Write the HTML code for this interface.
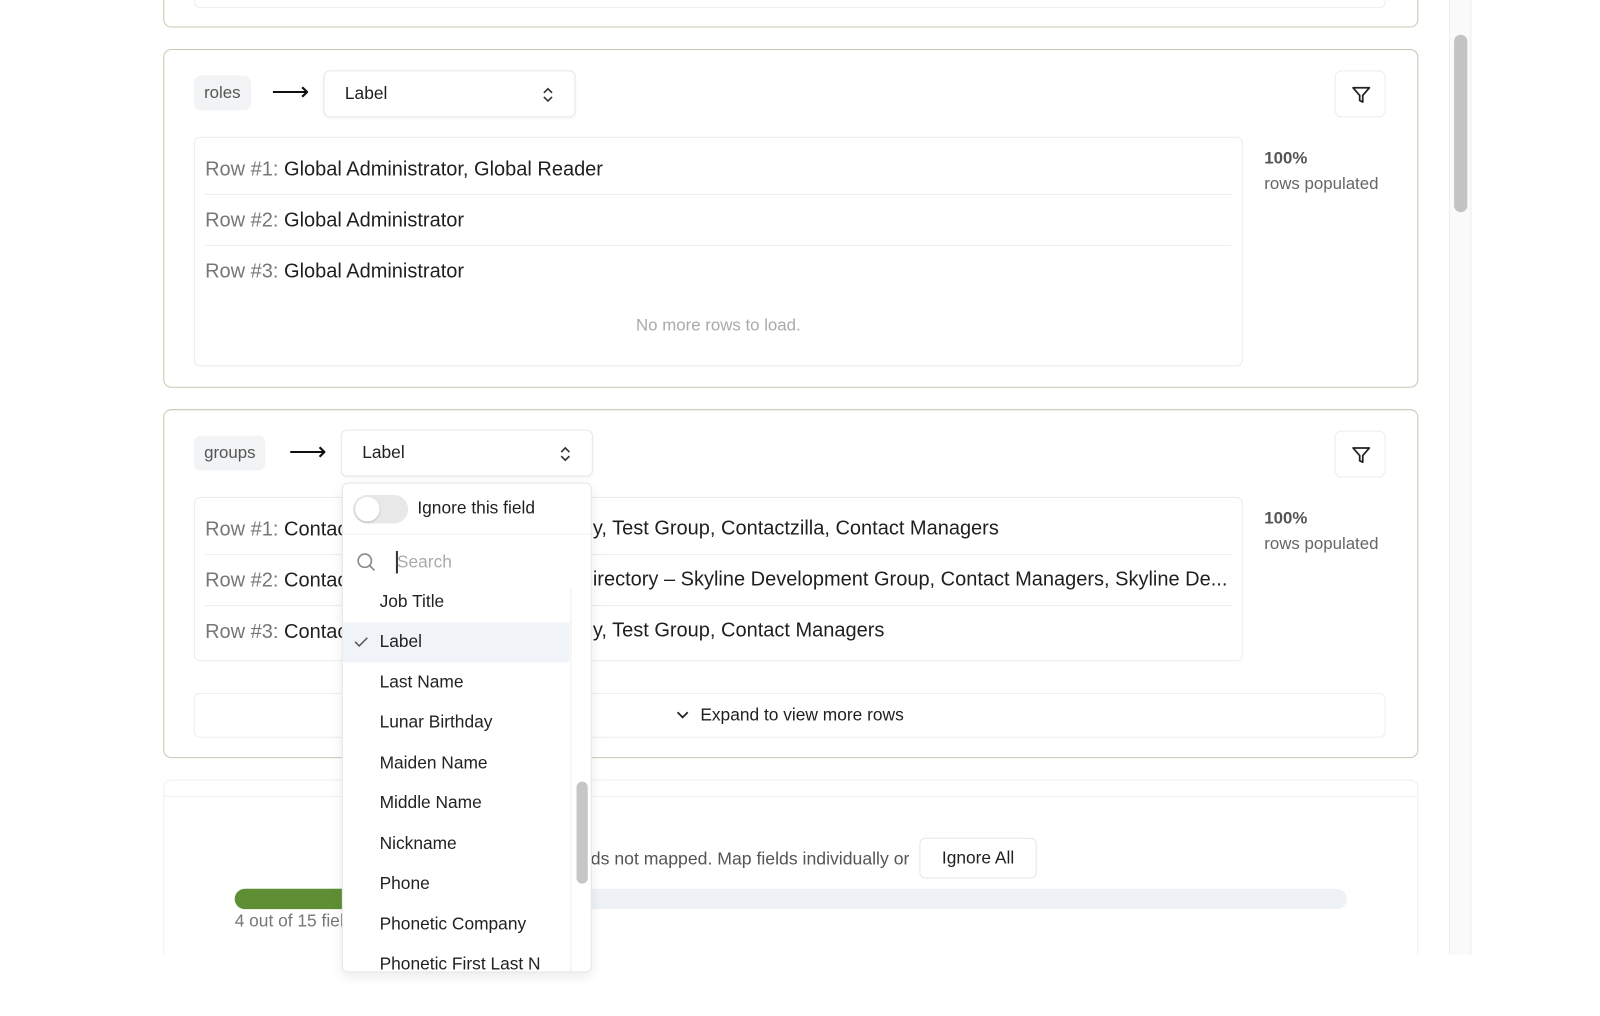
<!DOCTYPE html>
<html><head><style>
*{box-sizing:border-box;margin:0;padding:0}
body{width:1600px;height:974px;background:#fff;font-family:"Liberation Sans",sans-serif;color:#1f1f1f;position:relative;overflow:hidden}
#w{position:absolute;left:0;top:0;width:1568px;height:955px;transform:scale(1.0204);transform-origin:0 0}
.abs{position:absolute}
.card{position:absolute;left:160px;width:1230px;border:1.5px solid #c4c9b0;border-radius:8px;background:#fff}
.tag{position:absolute;background:#f1f3f4;border-radius:7px;font-size:16.5px;color:#555;padding:0 10px;height:34px;line-height:34px}
.sel{position:absolute;border:1px solid #e6e6e6;border-radius:6px;height:46px;width:247px;font-size:17px;line-height:44px;padding-left:20px;box-shadow:0 1px 2px rgba(0,0,0,.04)}
.sel svg{position:absolute;right:20px;top:14px}
.filt{position:absolute;left:1308px;width:50px;height:46px;border:1px solid #ececec;border-radius:7px}
.filt svg{position:absolute;left:15px;top:13px}
.rows{position:absolute;left:190px;width:1028px;border:1px solid #ececec;border-radius:6px}
.row{position:absolute;left:10px;right:10px;font-size:19.6px;height:50px;line-height:50px;border-bottom:1px solid #ececec;white-space:nowrap;overflow:hidden}
.row span{color:#777}
.rt{position:absolute;left:581px;font-size:19.6px;line-height:50px;white-space:nowrap}
.pct{position:absolute;left:1239px;font-size:16.5px;color:#666;line-height:25px}
.pct b{color:#555}
.arrow{position:absolute;font-size:26px;color:#111}
.dd{position:absolute;left:335px;top:473px;width:245px;height:480px;background:#fff;border:1px solid #e6e6e6;border-radius:6px;box-shadow:0 4px 12px rgba(0,0,0,.08);overflow:hidden}
.it{position:absolute;left:36px;font-size:17px;color:#222}
</style></head><body><div id="w">
<div class="abs" style="left:1420px;top:0;width:22px;height:936px;background:#fafafa;border-left:1px solid #eee;border-right:1px solid #eee"></div>
<div class="abs" style="left:1425px;top:34px;width:13px;height:174px;background:#c4c4c4;border-radius:7px"></div>

<div class="card" style="top:-20px;height:47px"></div>
<div class="abs" style="left:190px;top:-10px;width:1168px;height:18px;border:1px solid #eee;border-top:none;border-radius:0 0 6px 6px"></div>

<div class="card" style="top:48px;height:332px"></div>
<div class="tag" style="left:190px;top:74px">roles</div>
<div class="arrow" style="left:266px;top:74px">⟶</div>
<div class="sel" style="left:317px;top:69px">Label<svg width="12" height="18" viewBox="0 0 12 18"><path d="M2 7l4-4 4 4M2 11l4 4 4-4" fill="none" stroke="#333" stroke-width="1.6"/></svg></div>
<div class="filt" style="top:69px"><svg width="20" height="20" viewBox="0 0 20 20"><path d="M2 3h16l-6.5 7.5V17l-3-1.5v-5z" fill="none" stroke="#222" stroke-width="1.7" stroke-linejoin="round"/></svg></div>
<div class="rows" style="top:134px;height:225px">
<div class="row" style="top:6px"><span>Row #1:</span> Global Administrator, Global Reader</div>
<div class="row" style="top:56px"><span>Row #2:</span> Global Administrator</div>
<div class="row" style="top:106px;border:none"><span>Row #3:</span> Global Administrator</div>
<div class="abs" style="left:0;right:0;top:175px;text-align:center;font-size:16.5px;color:#aaa">No more rows to load.</div>
</div>
<div class="pct" style="top:143px"><b>100%</b><br>rows populated</div>

<div class="card" style="top:401px;height:342px"></div>
<div class="tag" style="left:190px;top:427px">groups</div>
<div class="arrow" style="left:283px;top:427px">⟶</div>
<div class="sel" style="left:334px;top:421px">Label<svg width="12" height="18" viewBox="0 0 12 18"><path d="M2 7l4-4 4 4M2 11l4 4 4-4" fill="none" stroke="#333" stroke-width="1.6"/></svg></div>
<div class="filt" style="top:422px"><svg width="20" height="20" viewBox="0 0 20 20"><path d="M2 3h16l-6.5 7.5V17l-3-1.5v-5z" fill="none" stroke="#222" stroke-width="1.7" stroke-linejoin="round"/></svg></div>
<div class="rows" style="top:487px;height:161px">
<div class="row" style="top:6px"><span>Row #1:</span> Contactzilla</div>
<div class="row" style="top:56px"><span>Row #2:</span> Contactzilla</div>
<div class="row" style="top:106px;border:none"><span>Row #3:</span> Contactzilla</div>
</div>
<div class="rt" style="top:493px">y, Test Group, Contactzilla, Contact Managers</div>
<div class="rt" style="top:543px;width:626px;overflow:hidden">irectory – Skyline Development Group, Contact Managers, Skyline De...</div>
<div class="rt" style="top:593px">y, Test Group, Contact Managers</div>
<div class="pct" style="top:496px"><b>100%</b><br>rows populated</div>
<div class="abs" style="left:190px;top:679px;width:1168px;height:44px;border:1px solid #eee;border-radius:6px;text-align:center;font-size:17px;line-height:42px"><svg width="14" height="10" viewBox="0 0 14 10" style="margin-right:10px"><path d="M2 2l5 5 5-5" fill="none" stroke="#222" stroke-width="1.7"/></svg>Expand to view more rows</div>

<div class="abs" style="left:160px;top:764px;width:1230px;height:190px;border:1px solid #eee;border-radius:8px"></div>
<div class="abs" style="left:161px;top:780px;width:1228px;height:1px;background:#f2f2f2"></div>
<div class="abs" style="left:579px;top:831px;font-size:17.3px;color:#555;white-space:nowrap">ds not mapped. Map fields individually or</div>
<div class="abs" style="left:901px;top:821px;width:115px;height:40px;border:1px solid #e6e6e6;border-radius:6px;text-align:center;line-height:38px;font-size:17px;background:#fff">Ignore All</div>
<div class="abs" style="left:230px;top:871px;width:1090px;height:20px;background:#eef2f7;border-radius:10px"></div>
<div class="abs" style="left:230px;top:871px;width:130px;height:20px;background:#5f8f35;border-radius:10px"></div>
<div class="abs" style="left:230px;top:893px;font-size:17px;color:#777">4 out of 15 fields</div>
<div class="abs" style="left:0;top:936px;width:1600px;height:60px;background:#fff"></div>

<div class="dd">
<div class="abs" style="left:10px;top:11px;width:54px;height:28px;border-radius:14px;background:#e8e8e8"></div>
<div class="abs" style="left:12px;top:13px;width:24px;height:24px;border-radius:12px;background:#fff;box-shadow:0 1px 2px rgba(0,0,0,.2)"></div>
<div class="abs" style="left:73px;top:14px;font-size:17px">Ignore this field</div>
<div class="abs" style="left:0;top:49px;width:245px;height:1px;background:#eee"></div>
<svg class="abs" style="left:13px;top:67px" width="20" height="20" viewBox="0 0 20 20"><circle cx="8.5" cy="8.5" r="6.5" fill="none" stroke="#888" stroke-width="1.6"/><path d="M13.5 13.5l4.5 4.5" stroke="#888" stroke-width="1.6"/></svg>
<div class="abs" style="left:52px;top:66px;width:1.5px;height:22px;background:#333"></div>
<div class="abs" style="left:53px;top:67px;font-size:17px;color:#aaa">Search</div>
<div class="abs" style="left:223px;top:103px;width:1px;height:380px;background:#eee"></div>
<div class="abs" style="left:229px;top:292px;width:11px;height:100px;background:#c6c6c6;border-radius:6px"></div>
<div class="abs" style="left:0;top:136px;width:222px;height:39px;background:#f0f3f8"></div>
<svg class="abs" style="left:11px;top:149px" width="14" height="12" viewBox="0 0 14 12"><path d="M1 6l4 4 8-8" fill="none" stroke="#555" stroke-width="1.5"/></svg>
<div class="it" style="top:106px">Job Title</div>
<div class="it" style="top:145px">Label</div>
<div class="it" style="top:185px">Last Name</div>
<div class="it" style="top:224px">Lunar Birthday</div>
<div class="it" style="top:264px">Maiden Name</div>
<div class="it" style="top:303px">Middle Name</div>
<div class="it" style="top:343px">Nickname</div>
<div class="it" style="top:382px">Phone</div>
<div class="it" style="top:422px">Phonetic Company</div>
<div class="it" style="top:461px">Phonetic First Last N</div>
</div>
</div></body></html>
